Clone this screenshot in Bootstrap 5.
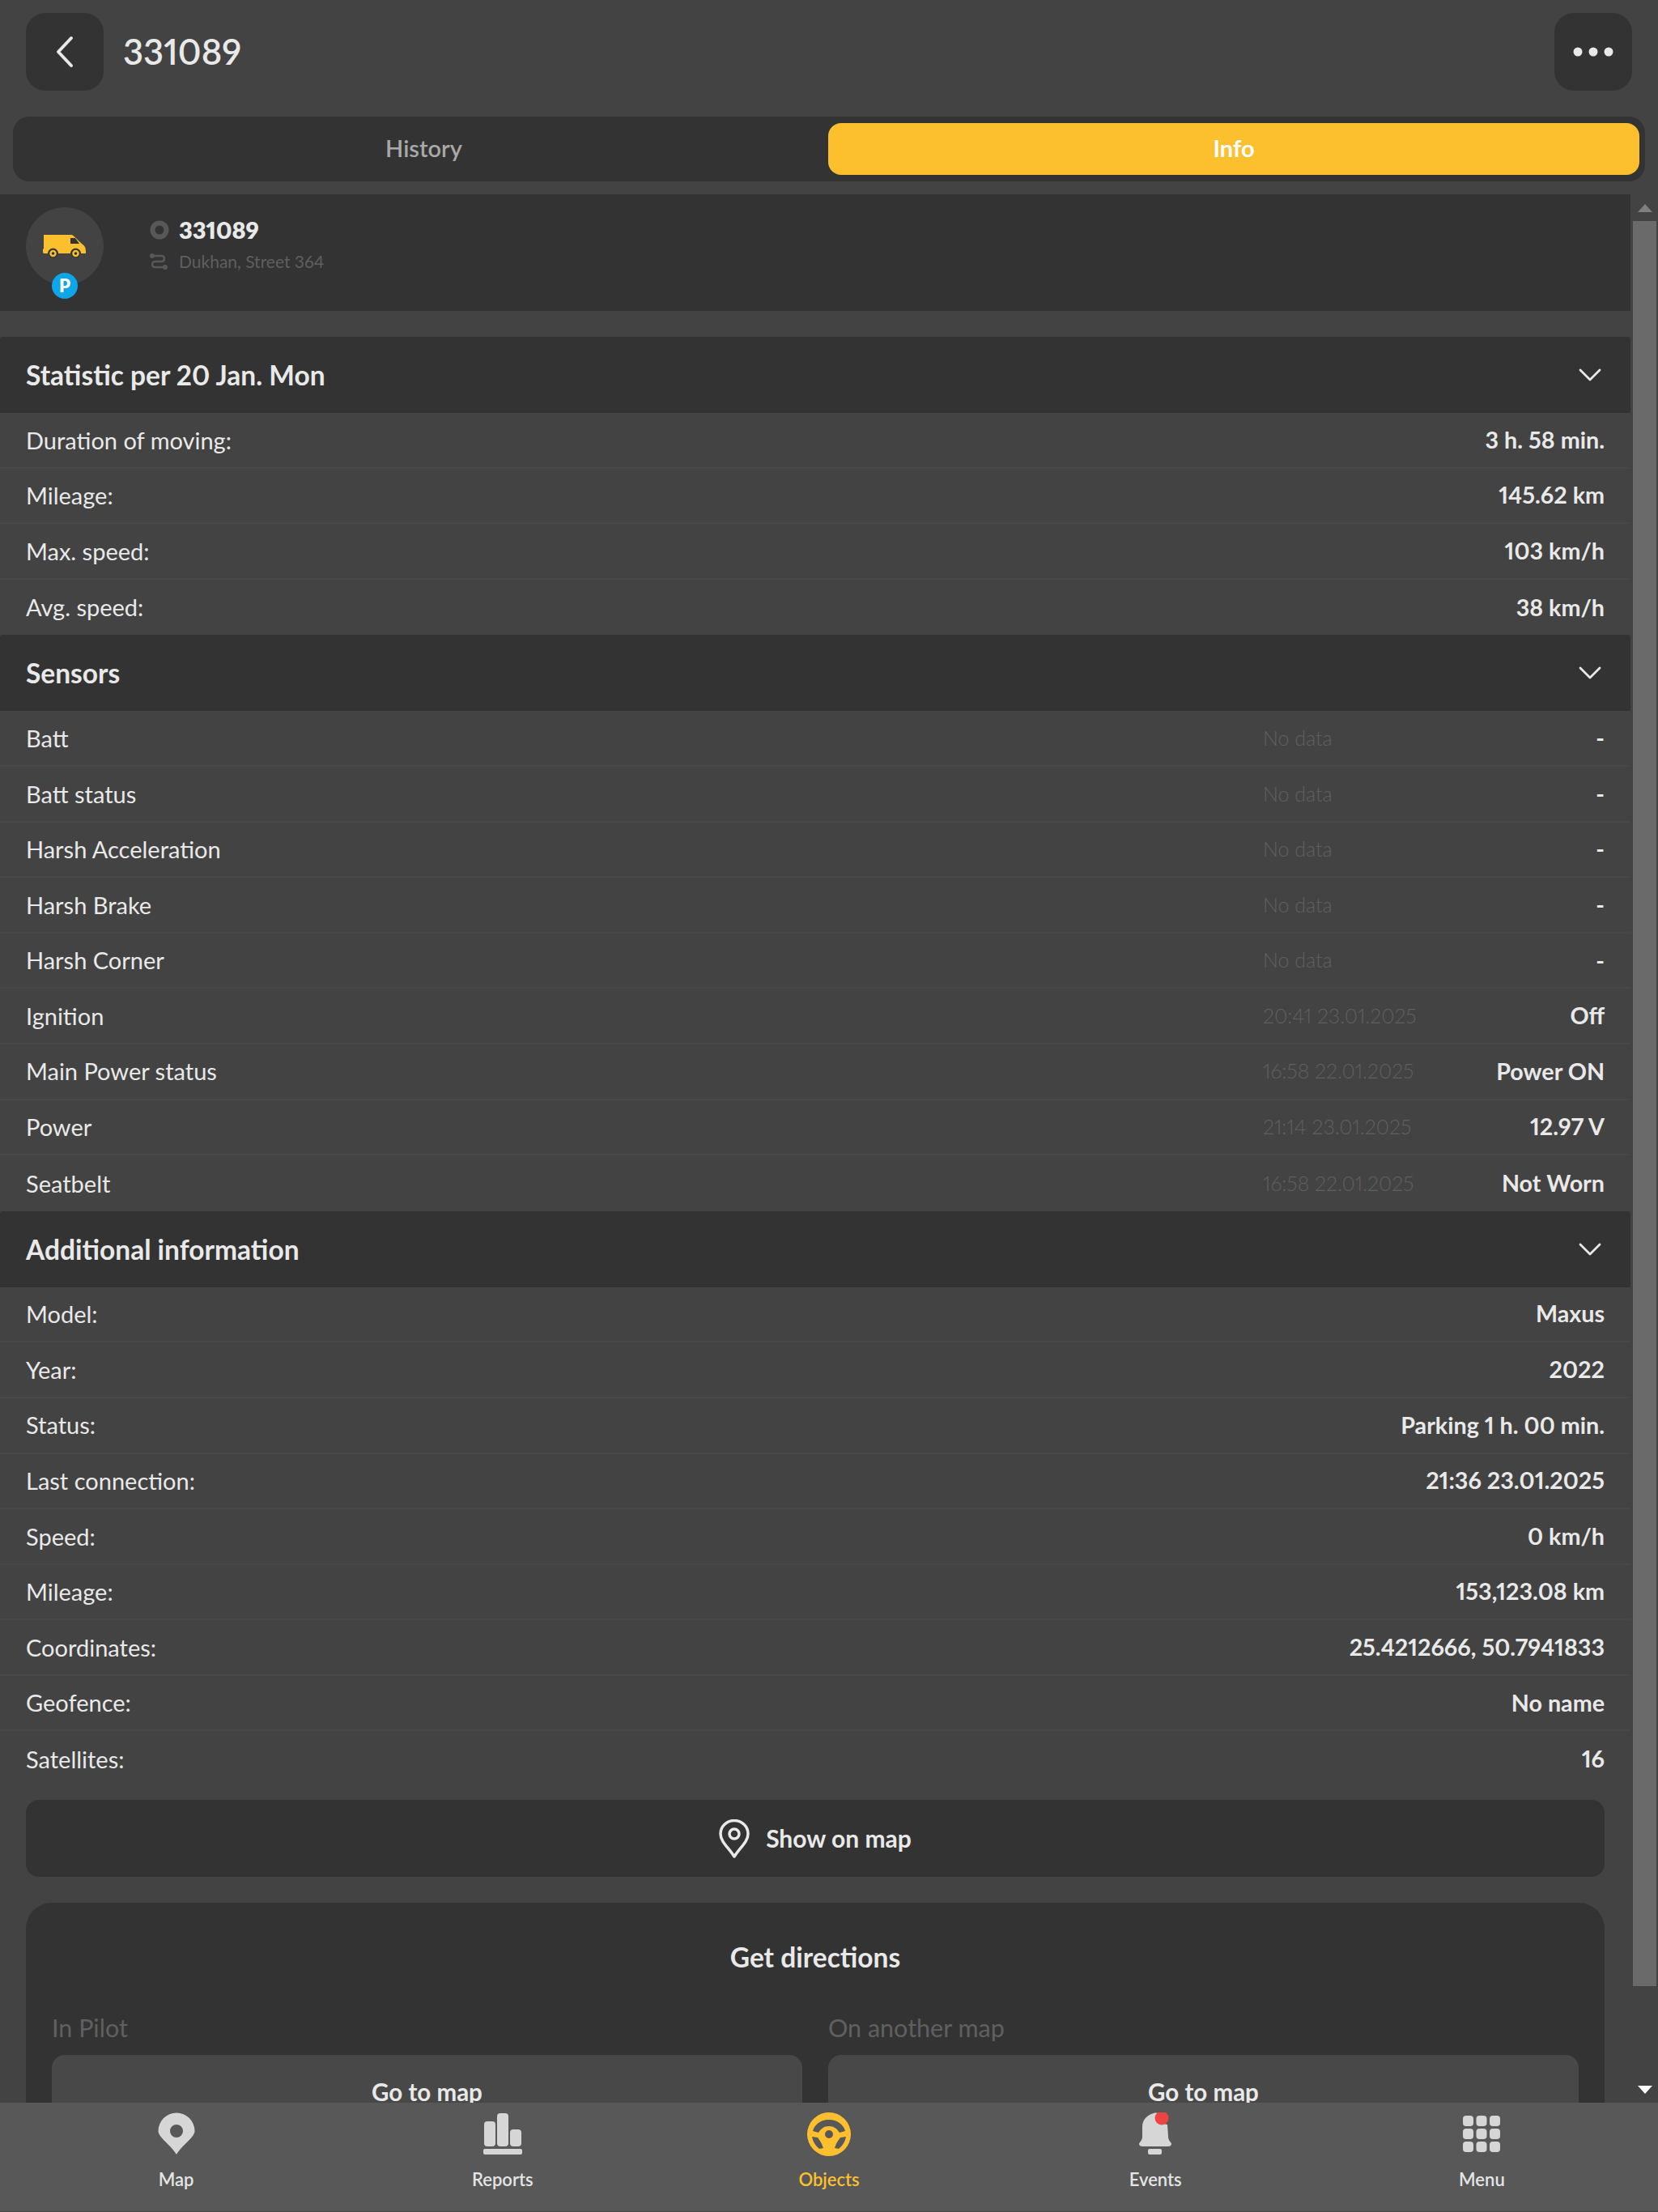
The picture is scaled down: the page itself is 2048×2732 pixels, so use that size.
<!DOCTYPE html>
<html lang="en">
<head>
<meta charset="utf-8">
<title>331089</title>
<link rel="stylesheet" href="https://cdn.jsdelivr.net/npm/bootstrap@5.3.0/dist/css/bootstrap.min.css">
<style>
html,body{height:2732px;overflow:hidden}
body{background:#434343;color:#e9e9e9;font-family:"Lato","Liberation Sans",sans-serif;font-size:29px;font-variant-numeric:proportional-nums}
.app-shell{height:2732px}
.top-head{height:144px;padding:16px 32px 32px}
.square-btn{width:96px;height:96px;background:#333;border:0;border-radius:24px;padding:0;color:#e9e9e9}
.square-btn:hover,.square-btn:active{background:#333!important}
.head-title{font-size:43.5px;font-weight:600;margin-left:24px}
.tab-track{height:80px;margin:0 16px 16px;background:#333;border-radius:20px;padding:8px 7px 8px 8px}
.tab-item{height:64px;border-radius:16px;font-size:29px;font-weight:600;color:#a9a9a9;border:0;padding:0 0 3px}
.tab-off{width:999px;background:transparent}
.tab-on{flex:1;background:#fcc02e;color:#fff;font-weight:700}
.tab-on:hover{background:#fcc02e;color:#fff}
.scroll-body{height:2357px;overflow:hidden}
.scroll-content{width:2014px;flex:none}
.scroll-rail{width:34px;flex:none}
.rail-arrow{height:33px;padding-left:9px}
.rail-thumb{width:29px;height:2180px;margin-left:3px;background:#6a6a6a}
.obj-card{height:144px;background:#333;margin-bottom:32px;padding:16px 32px}
.obj-avatar{width:96px;height:96px;border-radius:50%;background:#434343}
.park-dot{width:32px;height:32px;border-radius:50%;background:#0ea5e9;color:#fff;font-size:22px;font-weight:800;bottom:-17px;left:32px;line-height:32px}
.obj-text{margin-left:57px}
.obj-line-a{height:24px;margin-bottom:11px;margin-top:16px}
.obj-name{font-size:29px;font-weight:800;margin-left:12px}
.obj-addr{font-size:21px;color:#5f5f5f;margin-left:14px}
.sect-head{height:94px;background:#333;padding:0 36px 0 32px;font-size:33.5px;font-weight:700;border-radius:3px 3px 0 0}
.data-line{height:68.6px;padding:0 32px;border-bottom:2px solid #484848;font-size:29px;font-weight:400}
.data-line:last-child{border-bottom:0}
.line-label{width:1528px;flex:none}
.line-stamp{font-size:25px;color:#606060;font-weight:300}
.line-value{margin-left:auto;font-weight:700;font-size:28.7px}
.wide-btn{display:flex;width:calc(100% - 64px);height:95px;margin:16px 32px 32px;background:#333;border:0;border-radius:16px;color:#e9e9e9;font-size:30px;font-weight:700;gap:20px}
.wide-btn:hover{background:#333;color:#e9e9e9}
.route-card{margin:0 32px;background:#333;border-radius:32px 32px 0 0;padding:30px 32px 40px}
.route-title{font-size:33.5px;font-weight:700;text-align:center;height:74px;line-height:74px;margin-bottom:33px}
.route-label{font-size:30.5px;color:#606060;height:34px;line-height:34px;margin-bottom:17px}
.go-btn{display:block;width:100%;height:96px;background:#484848;border:0;border-radius:16px;color:#e9e9e9;font-size:29.5px;font-weight:700;padding:0 0 4px}
.go-btn:hover{background:#484848;color:#e9e9e9}
.route-cols{--bs-gutter-x:32px}
.bottom-nav{height:135px;background:#585858;padding:0 16px;border-bottom:1px solid #444}
.nav-slot{flex:1 1 0;color:#e4e4e4;font-size:22px;font-weight:600}
.nav-slot svg{display:block;height:60px;width:80px;margin:12px auto 6px}
.nav-active{color:#fcc02e}
</style>
</head>
<body>
<div class="app-shell d-flex flex-column">
  <div class="top-head d-flex align-items-center">
    <button class="btn square-btn d-flex align-items-center justify-content-center" type="button" aria-label="Back">
      <svg width="24" height="40" viewBox="0 0 24 40" fill="none" stroke="#e9e9e9" stroke-width="4" stroke-linecap="round" stroke-linejoin="round"><path d="M20 3 L4 20 L20 37"/></svg>
    </button>
    <div class="head-title">331089</div>
    <button class="btn square-btn d-flex align-items-center justify-content-center ms-auto" type="button" aria-label="More">
      <svg width="50" height="12" viewBox="0 0 50 12" fill="#e9e9e9"><circle cx="6" cy="6" r="5.500"/><circle cx="25" cy="6" r="5.500"/><circle cx="44" cy="6" r="5.500"/></svg>
    </button>
  </div>
  <div class="tab-track d-flex">
    <button class="btn tab-item tab-off" type="button">History</button>
    <button class="btn tab-item tab-on" type="button">Info</button>
  </div>
  <div class="scroll-body d-flex">
    <div class="scroll-content">
      <div class="obj-card d-flex">
        <div class="obj-avatar position-relative d-flex align-items-center justify-content-center flex-shrink-0">
          <svg width="54" height="28" viewBox="0 0 54 28"><path fill="#fcc02e" d="M1 0 H35 Q37 0 38 1.500 L48 11 Q53 14 53 20 V23 H47 A6.500 6.500 0 0 0 34 23 H19 A6.500 6.500 0 0 0 6 23 H1 Q0 23 0 21 V18 L1 17 Z"/><path fill="#333" d="M34 4 H40 L45 11 H34 Z"/><circle cx="12.500" cy="23" r="5" fill="#fcc02e" stroke="#333" stroke-width="1.500"/><circle cx="12.500" cy="23" r="1.800" fill="#333"/><circle cx="40.500" cy="23" r="5" fill="#fcc02e" stroke="#333" stroke-width="1.500"/><circle cx="40.500" cy="23" r="1.800" fill="#333"/></svg>
          <span class="park-dot position-absolute text-center">P</span>
        </div>
        <div class="obj-text">
          <div class="obj-line-a d-flex align-items-center">
            <svg width="24" height="24" viewBox="0 0 24 24" fill="none" stroke="#585858" stroke-width="6"><circle cx="12" cy="12" r="8.500"/></svg>
            <span class="obj-name">331089</span>
          </div>
          <div class="d-flex align-items-center">
            <svg width="22" height="20" viewBox="0 0 22 20" fill="none" stroke="#585858" stroke-width="2.500" stroke-linecap="round"><circle cx="3" cy="3" r="1.800" fill="#585858"/><circle cx="19" cy="17" r="1.800" fill="#585858"/><path d="M4 3 H14 Q18 3 18 6.500 Q18 10 14 10 H7 Q3 10 3 13.500 Q3 17 7 17 H18"/></svg>
            <span class="obj-addr">Dukhan, Street 364</span>
          </div>
        </div>
      </div>

      <div class="sect-head d-flex align-items-center justify-content-between"><span>Statistic per 20 Jan. Mon</span>
        <svg width="28" height="16" viewBox="0 0 28 16" fill="none" stroke="#e9e9e9" stroke-width="2.800" stroke-linecap="round" stroke-linejoin="round"><path d="M2 2 L14 14 L26 2"/></svg></div>
      <div>
        <div class="data-line d-flex align-items-center"><span class="line-label">Duration of moving:</span><span class="line-value">3 h. 58 min.</span></div>
        <div class="data-line d-flex align-items-center"><span class="line-label">Mileage:</span><span class="line-value">145.62 km</span></div>
        <div class="data-line d-flex align-items-center"><span class="line-label">Max. speed:</span><span class="line-value">103 km/h</span></div>
        <div class="data-line d-flex align-items-center"><span class="line-label">Avg. speed:</span><span class="line-value">38 km/h</span></div>
      </div>

      <div class="sect-head d-flex align-items-center justify-content-between"><span>Sensors</span>
        <svg width="28" height="16" viewBox="0 0 28 16" fill="none" stroke="#e9e9e9" stroke-width="2.800" stroke-linecap="round" stroke-linejoin="round"><path d="M2 2 L14 14 L26 2"/></svg></div>
      <div>
        <div class="data-line d-flex align-items-center"><span class="line-label">Batt</span><span class="line-stamp">No data</span><span class="line-value">-</span></div>
        <div class="data-line d-flex align-items-center"><span class="line-label">Batt status</span><span class="line-stamp">No data</span><span class="line-value">-</span></div>
        <div class="data-line d-flex align-items-center"><span class="line-label">Harsh Acceleration</span><span class="line-stamp">No data</span><span class="line-value">-</span></div>
        <div class="data-line d-flex align-items-center"><span class="line-label">Harsh Brake</span><span class="line-stamp">No data</span><span class="line-value">-</span></div>
        <div class="data-line d-flex align-items-center"><span class="line-label">Harsh Corner</span><span class="line-stamp">No data</span><span class="line-value">-</span></div>
        <div class="data-line d-flex align-items-center"><span class="line-label">Ignition</span><span class="line-stamp">20:41 23.01.2025</span><span class="line-value">Off</span></div>
        <div class="data-line d-flex align-items-center"><span class="line-label">Main Power status</span><span class="line-stamp">16:58 22.01.2025</span><span class="line-value">Power ON</span></div>
        <div class="data-line d-flex align-items-center"><span class="line-label">Power</span><span class="line-stamp">21:14 23.01.2025</span><span class="line-value">12.97 V</span></div>
        <div class="data-line d-flex align-items-center"><span class="line-label">Seatbelt</span><span class="line-stamp">16:58 22.01.2025</span><span class="line-value">Not Worn</span></div>
      </div>

      <div class="sect-head d-flex align-items-center justify-content-between"><span>Additional information</span>
        <svg width="28" height="16" viewBox="0 0 28 16" fill="none" stroke="#e9e9e9" stroke-width="2.800" stroke-linecap="round" stroke-linejoin="round"><path d="M2 2 L14 14 L26 2"/></svg></div>
      <div>
        <div class="data-line d-flex align-items-center"><span class="line-label">Model:</span><span class="line-value">Maxus</span></div>
        <div class="data-line d-flex align-items-center"><span class="line-label">Year:</span><span class="line-value">2022</span></div>
        <div class="data-line d-flex align-items-center"><span class="line-label">Status:</span><span class="line-value">Parking 1 h. 00 min.</span></div>
        <div class="data-line d-flex align-items-center"><span class="line-label">Last connection:</span><span class="line-value">21:36 23.01.2025</span></div>
        <div class="data-line d-flex align-items-center"><span class="line-label">Speed:</span><span class="line-value">0 km/h</span></div>
        <div class="data-line d-flex align-items-center"><span class="line-label">Mileage:</span><span class="line-value">153,123.08 km</span></div>
        <div class="data-line d-flex align-items-center"><span class="line-label">Coordinates:</span><span class="line-value">25.4212666, 50.7941833</span></div>
        <div class="data-line d-flex align-items-center"><span class="line-label">Geofence:</span><span class="line-value">No name</span></div>
        <div class="data-line d-flex align-items-center"><span class="line-label">Satellites:</span><span class="line-value">16</span></div>
      </div>

      <button class="btn wide-btn align-items-center justify-content-center" type="button">
        <svg width="38" height="48" viewBox="0 0 38 48" fill="none" stroke="#e9e9e9" stroke-width="3.500" stroke-linejoin="round"><path d="M19 46 C13 36 2 28 2 18 A17 16.500 0 0 1 36 18 C36 28 25 36 19 46 Z"/><circle cx="19" cy="18" r="6"/></svg>
        <span>Show on map</span>
      </button>

      <div class="route-card">
        <div class="route-title">Get directions</div>
        <div class="row route-cols">
          <div class="col-6">
            <div class="route-label">In Pilot</div>
            <button class="btn go-btn" type="button">Go to map</button>
          </div>
          <div class="col-6">
            <div class="route-label">On another map</div>
            <button class="btn go-btn" type="button">Go to map</button>
          </div>
        </div>
      </div>
    </div>
    <div class="scroll-rail d-flex flex-column">
      <div class="rail-arrow d-flex align-items-center"><svg width="18" height="10" viewBox="0 0 18 10" fill="#808080"><path d="M9 0 L18 10 H0 Z"/></svg></div>
      <div class="rail-thumb"></div>
      <div class="flex-grow-1"></div>
      <div class="rail-arrow d-flex align-items-center"><svg width="18" height="10" viewBox="0 0 18 10" fill="#fff"><path d="M0 0 H18 L9 10 Z"/></svg></div>
    </div>
  </div>
  <div class="bottom-nav d-flex">
    <div class="nav-slot text-center">
      <svg viewBox="0 0 80 60" fill="#d6d6d6"><path fill-rule="evenodd" d="M40 52 C33 40 17.500 31 17.500 23 A22.500 22.500 0 0 1 62.500 23 C62.500 31 47 40 40 52 Z M40 15 A8 8 0 1 0 40 31 A8 8 0 0 0 40 15 Z"/></svg>
      <div>Map</div>
    </div>
    <div class="nav-slot text-center">
      <svg viewBox="0 0 80 60" fill="#d6d6d6"><rect x="17" y="11" width="14" height="31" rx="4"/><rect x="33" y="1" width="14" height="41" rx="4"/><rect x="49" y="21" width="14" height="21" rx="4"/><rect x="16" y="45" width="48" height="7" rx="2"/></svg>
      <div>Reports</div>
    </div>
    <div class="nav-slot nav-active text-center">
      <svg viewBox="0 0 80 60" fill="#fcc02e"><path fill-rule="evenodd" d="M40 0 A27 27 0 1 0 40 54 A27 27 0 0 0 40 0 Z M40 9 C50 9 58 15 60 23 L53 25 C50 20 46 17 40 17 C34 17 30 20 27 25 L20 23 C22 15 30 9 40 9 Z M40 22 A5 5 0 1 1 40 32 A5 5 0 0 1 40 22 Z M19 30 L26 31 C29 35 31 38 33 44 L28 45 C23 41 20 36 19 30 Z M61 30 L54 31 C51 35 49 38 47 44 L52 45 C57 41 60 36 61 30 Z"/></svg>
      <div>Objects</div>
    </div>
    <div class="nav-slot text-center">
      <svg viewBox="0 0 80 60" fill="#d6d6d6"><path d="M38 1 C41 0 43 1 45 2 C43 8 47 14 55 15 L56 30 C56 35 60 37 60 39 C60 41 58 42 56 42 H24 C22 42 20 41 20 39 C20 37 24 35 24 30 V18 C24 9 30 3 38 1 Z"/><rect x="31" y="45" width="17" height="7" rx="2"/><circle cx="48" cy="7" r="8.500" fill="#ef4444"/></svg>
      <div>Events</div>
    </div>
    <div class="nav-slot text-center">
      <svg viewBox="0 0 80 60" fill="#d6d6d6"><rect x="17" y="4" width="13" height="13" rx="4"/><rect x="33.500" y="4" width="13" height="13" rx="4"/><rect x="50" y="4" width="13" height="13" rx="4"/><rect x="17" y="20" width="13" height="13" rx="4"/><rect x="33.500" y="20" width="13" height="13" rx="4"/><rect x="50" y="20" width="13" height="13" rx="4"/><rect x="17" y="36" width="13" height="13" rx="4"/><rect x="33.500" y="36" width="13" height="13" rx="4"/><rect x="50" y="36" width="13" height="13" rx="4"/></svg>
      <div>Menu</div>
    </div>
  </div>
</div>
<script src="https://cdn.jsdelivr.net/npm/bootstrap@5.3.0/dist/js/bootstrap.bundle.min.js"></script>
</body>
</html>
